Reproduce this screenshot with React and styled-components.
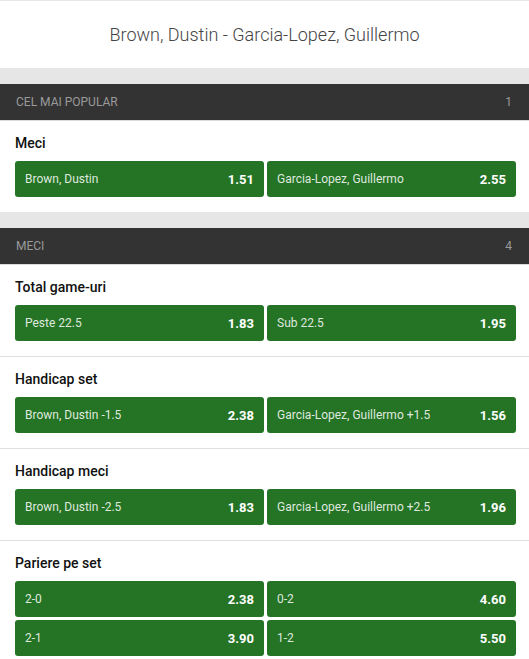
import React from 'react';
import styled, { createGlobalStyle } from 'styled-components';

const GlobalStyle = createGlobalStyle`
  * { box-sizing: border-box; }
  body {
    margin: 0;
    background: #e6e6e6;
    font-family: Roboto, "Liberation Sans", Arial, sans-serif;
  }
`;

const markets = [
  {
    group: 'CEL MAI POPULAR',
    count: 1,
    items: [
      { title: 'Meci', odds: [['Brown, Dustin', '1.51'], ['Garcia-Lopez, Guillermo', '2.55']] },
    ],
  },
  {
    group: 'MECI',
    count: 4,
    items: [
      { title: 'Total game-uri', odds: [['Peste 22.5', '1.83'], ['Sub 22.5', '1.95']] },
      { title: 'Handicap set', odds: [['Brown, Dustin -1.5', '2.38'], ['Garcia-Lopez, Guillermo +1.5', '1.56']] },
      { title: 'Handicap meci', odds: [['Brown, Dustin -2.5', '1.83'], ['Garcia-Lopez, Guillermo +2.5', '1.96']] },
      {
        title: 'Pariere pe set',
        odds: [['2-0', '2.38'], ['0-2', '4.60'], ['2-1', '3.90'], ['1-2', '5.50']],
      },
    ],
  },
];

const App = () => {
  return (
    <>
      <GlobalStyle />
      <Page>
        <EventHeader>Brown, Dustin - Garcia-Lopez, Guillermo</EventHeader>
        {markets.map((m) => (
          <Group key={m.group}>
            <GroupBar>
              <span>{m.group}</span>
              <span>{m.count}</span>
            </GroupBar>
            {m.items.map((item) => (
              <Market key={item.title}>
                <MarketTitle>{item.title}</MarketTitle>
                <OddsGrid>
                  {item.odds.map(([label, price]) => (
                    <OddButton key={label}>
                      <Label>{label}</Label>
                      <Price>{price}</Price>
                    </OddButton>
                  ))}
                </OddsGrid>
              </Market>
            ))}
          </Group>
        ))}
      </Page>
    </>
  );
};

const Page = styled.div`
  width: 529px;
  padding-top: 1px;
`;

const EventHeader = styled.div`
  background: #fff;
  height: 67px;
  display: flex;
  align-items: center;
  justify-content: center;
  padding-bottom: 1px;
  font-size: 18px;
  font-weight: 300;
  color: #444;
`;

const Group = styled.section`
  margin-top: 16px;
`;

const GroupBar = styled.div`
  height: 37px;
  background: #333;
  border-bottom: 1px solid #dcdcdc;
  display: flex;
  align-items: center;
  justify-content: space-between;
  padding: 0 17px 0 16px;
  font-size: 12px;
  color: #9a9a9a;
`;

const Market = styled.div`
  background: #fff;
  padding: 12px 13px 15px 15px;
  & + & {
    border-top: 1px solid #e0e0e0;
  }
`;

const MarketTitle = styled.h4`
  margin: 0 0 8px;
  font-size: 14px;
  line-height: 20px;
  font-weight: 500;
  color: #111;
`;

const OddsGrid = styled.div`
  display: grid;
  grid-template-columns: 1fr 1fr;
  gap: 3px;
`;

const OddButton = styled.button`
  height: 36px;
  border: none;
  border-radius: 3px;
  background: #257325;
  display: flex;
  align-items: center;
  justify-content: space-between;
  padding: 0 10px;
  font-family: inherit;
  cursor: pointer;
`;

const Label = styled.span`
  font-size: 12px;
  color: #dfe9df;
`;

const Price = styled.span`
  font-size: 13px;
  color: #fff;
  font-weight: 700;
`;

export default App;
